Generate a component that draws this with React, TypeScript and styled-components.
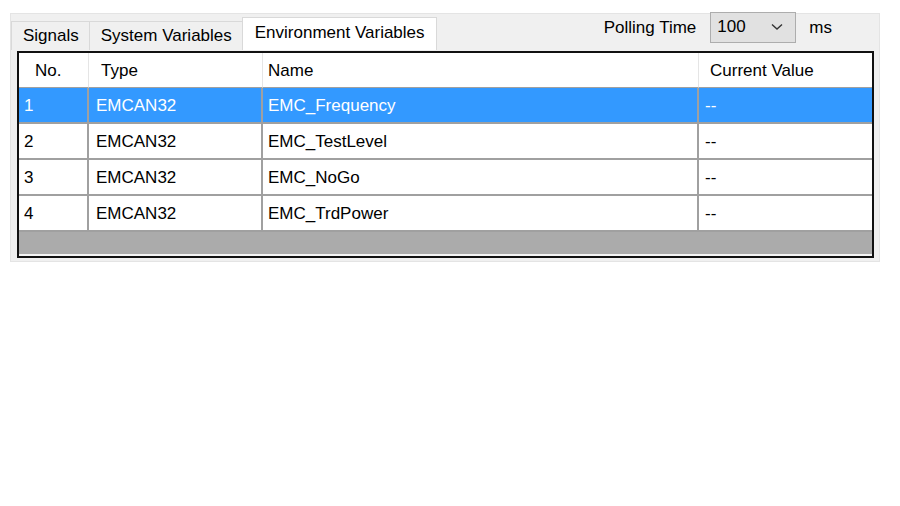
import styled, { createGlobalStyle } from "styled-components";

const GlobalStyle = createGlobalStyle`
  html, body {
    margin: 0;
    padding: 0;
    background: #ffffff;
  }
  body {
    font-family: "Liberation Sans", Arial, sans-serif;
    font-size: 17px;
    color: #000;
  }
`;

type Row = { no: number; type: string; name: string; value: string };

const rows: Row[] = [
  { no: 1, type: "EMCAN32", name: "EMC_Frequency", value: "--" },
  { no: 2, type: "EMCAN32", name: "EMC_TestLevel", value: "--" },
  { no: 3, type: "EMCAN32", name: "EMC_NoGo", value: "--" },
  { no: 4, type: "EMCAN32", name: "EMC_TrdPower", value: "--" },
];

function App() {
  return (
    <>
      <GlobalStyle />
      <Panel>
        <TopBar>
          <TabStrip>
            <Tab>Signals</Tab>
            <Tab>System Variables</Tab>
            <Tab $active>Environment Variables</Tab>
          </TabStrip>
          <Polling>
            <span>Polling Time</span>
            <Combo>
              <span>100</span>
              <svg width="12" height="8" viewBox="0 0 12 8">
                <path d="M1 1.5 L6 6 L11 1.5" fill="none" stroke="#333" strokeWidth="1.4" />
              </svg>
            </Combo>
            <Unit>ms</Unit>
          </Polling>
        </TopBar>
        <Frame>
          <Grid>
            <HeadCell $pad="16px">No.</HeadCell>
            <HeadCell $pad="12px">Type</HeadCell>
            <HeadCell $pad="5px">Name</HeadCell>
            <HeadCell $pad="11px" $last>
              Current Value
            </HeadCell>
            {rows.map((r, i) => {
              const sel = i === 0;
              return [
                <Cell key={`n${r.no}`} $sel={sel} $pad="5px">
                  {r.no}
                </Cell>,
                <Cell key={`t${r.no}`} $sel={sel} $pad="7px">
                  {r.type}
                </Cell>,
                <Cell key={`m${r.no}`} $sel={sel} $pad="5px">
                  {r.name}
                </Cell>,
                <Cell key={`v${r.no}`} $sel={sel} $pad="6px" $last>
                  {r.value}
                </Cell>,
              ];
            })}
          </Grid>
          <Empty />
        </Frame>
      </Panel>
    </>
  );
}
export default App;

const Panel = styled.div`
  margin: 13px 0 0 10px;
  width: 868px;
  height: 247px;
  background: #f0f0f0;
  border: 1px solid #e4e4e4;
  display: flex;
  flex-direction: column;
`;

const TopBar = styled.div`
  display: flex;
  justify-content: space-between;
  align-items: flex-end;
  height: 36px;
  padding-left: 1px;
`;

const TabStrip = styled.div`
  display: flex;
  align-items: flex-end;
  height: 100%;
`;

const Tab = styled.div<{ $active?: boolean }>`
  box-sizing: border-box;
  height: ${(p) => (p.$active ? "33px" : "29px")};
  padding: ${(p) => (p.$active ? "0 11px 2px 12px" : "0 10px 0 11px")};
  display: flex;
  align-items: center;
  background: ${(p) => (p.$active ? "#ffffff" : "#f0f0f0")};
  border: 1px solid #d9d9d9;
  border-bottom: none;
  margin-left: -1px;
  white-space: nowrap;
  color: #000;
`;

const Polling = styled.div`
  display: flex;
  align-items: center;
  align-self: flex-start;
  margin-top: -2px;
  padding-right: 47px;
`;

const Combo = styled.div`
  box-sizing: border-box;
  width: 86px;
  height: 31px;
  margin-left: 14px;
  padding: 0 12px 2px 6px;
  display: flex;
  align-items: center;
  justify-content: space-between;
  background: #e1e1e1;
  border: 1px solid #adadad;
`;

const Unit = styled.span`
  margin-left: 13px;
`;

const Frame = styled.div`
  box-sizing: border-box;
  margin: 1px 0 0 6px;
  width: 857px;
  height: 207px;
  border: 2px solid #111;
  background: #ababab;
  display: flex;
  flex-direction: column;
`;

const Grid = styled.div`
  display: grid;
  grid-template-columns: 70px 174px 436px 1fr;
  grid-auto-rows: 36px;
  grid-template-rows: 35px;
  background: #ffffff;
`;

const HeadCell = styled.div<{ $pad: string; $last?: boolean }>`
  display: flex;
  align-items: center;
  padding-left: ${(p) => p.$pad};
  padding-top: 2px;
  background: #ffffff;
  border-right: ${(p) => (p.$last ? "none" : "1px solid #e5e5e5")};
  border-bottom: 1px solid #a0a0a0;
`;

const Cell = styled.div<{ $sel: boolean; $pad: string; $last?: boolean }>`
  display: flex;
  align-items: center;
  padding-left: ${(p) => p.$pad};
  padding-top: 2px;
  background: ${(p) => (p.$sel ? "#3399ff" : "#ffffff")};
  color: ${(p) => (p.$sel ? "#ffffff" : "#000000")};
  border-right: ${(p) => (p.$last ? "none" : "2px solid #a0a0a0")};
  border-bottom: 2px solid #a0a0a0;
  white-space: nowrap;
`;

const Empty = styled.div`
  flex: 1;
  background: #ababab;
  border-bottom: 2px solid #f4f4f4;
`;
